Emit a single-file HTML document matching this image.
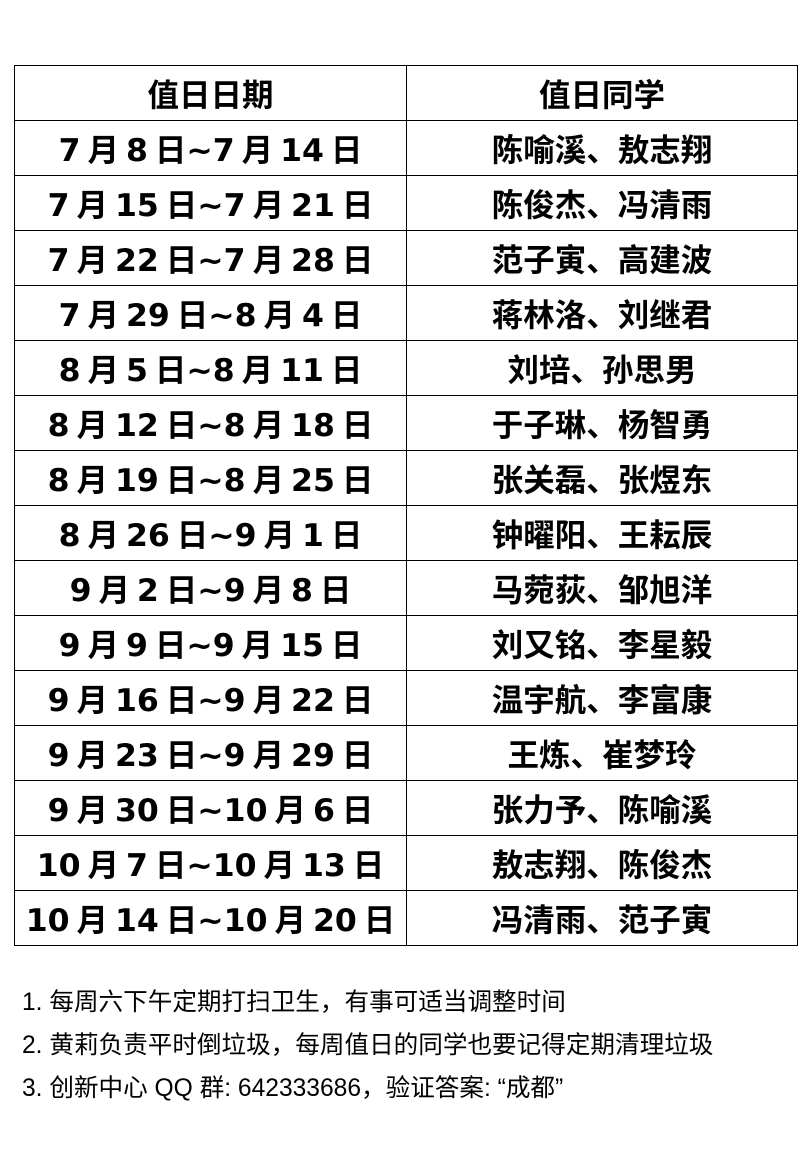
<!DOCTYPE html>
<html><head><meta charset="utf-8"><style>
body{margin:0;width:811px;height:1149px;background:#fff;font-family:"Liberation Sans","Noto Sans CJK SC",sans-serif;color:#000;}
table{position:absolute;left:14px;top:65px;border-collapse:collapse;}
td{border:1px solid #000;height:54px;padding:0;text-align:center;font-weight:bold;font-size:31.5px;font-family:"DejaVu Sans","Noto Sans CJK SC",sans-serif;line-height:54px;white-space:nowrap;}
td span{position:relative;top:3px;}
td.a{width:391px;}td.b{width:390px;}
tr td:first-child{word-spacing:-4px;}
.n{position:absolute;left:22px;font-size:24.6px;font-family:"Liberation Sans","Noto Sans CJK SC",sans-serif;white-space:nowrap;}
</style></head><body>
<table>
<tr><td class="a"><span>值日日期</span></td><td class="b"><span>值日同学</span></td></tr>
<tr><td><span>7 月 8 日~7 月 14 日</span></td><td><span>陈喻溪、敖志翔</span></td></tr>
<tr><td><span>7 月 15 日~7 月 21 日</span></td><td><span>陈俊杰、冯清雨</span></td></tr>
<tr><td><span>7 月 22 日~7 月 28 日</span></td><td><span>范子寅、高建波</span></td></tr>
<tr><td><span>7 月 29 日~8 月 4 日</span></td><td><span>蒋林洛、刘继君</span></td></tr>
<tr><td><span>8 月 5 日~8 月 11 日</span></td><td><span>刘培、孙思男</span></td></tr>
<tr><td><span>8 月 12 日~8 月 18 日</span></td><td><span>于子琳、杨智勇</span></td></tr>
<tr><td><span>8 月 19 日~8 月 25 日</span></td><td><span>张关磊、张煜东</span></td></tr>
<tr><td><span>8 月 26 日~9 月 1 日</span></td><td><span>钟曜阳、王耘辰</span></td></tr>
<tr><td><span>9 月 2 日~9 月 8 日</span></td><td><span>马菀荻、邹旭洋</span></td></tr>
<tr><td><span>9 月 9 日~9 月 15 日</span></td><td><span>刘又铭、李星毅</span></td></tr>
<tr><td><span>9 月 16 日~9 月 22 日</span></td><td><span>温宇航、李富康</span></td></tr>
<tr><td><span>9 月 23 日~9 月 29 日</span></td><td><span>王炼、崔梦玲</span></td></tr>
<tr><td><span>9 月 30 日~10 月 6 日</span></td><td><span>张力予、陈喻溪</span></td></tr>
<tr><td><span>10 月 7 日~10 月 13 日</span></td><td><span>敖志翔、陈俊杰</span></td></tr>
<tr><td><span>10 月 14 日~10 月 20 日</span></td><td><span>冯清雨、范子寅</span></td></tr>
</table>
<div class="n" style="top:982px">1. 每周六下午定期打扫卫生，有事可适当调整时间</div>
<div class="n" style="top:1025px">2. 黄莉负责平时倒垃圾，每周值日的同学也要记得定期清理垃圾</div>
<div class="n" style="top:1068px">3. 创新中心 QQ 群: 642333686，验证答案: “成都”</div>
</body></html>
